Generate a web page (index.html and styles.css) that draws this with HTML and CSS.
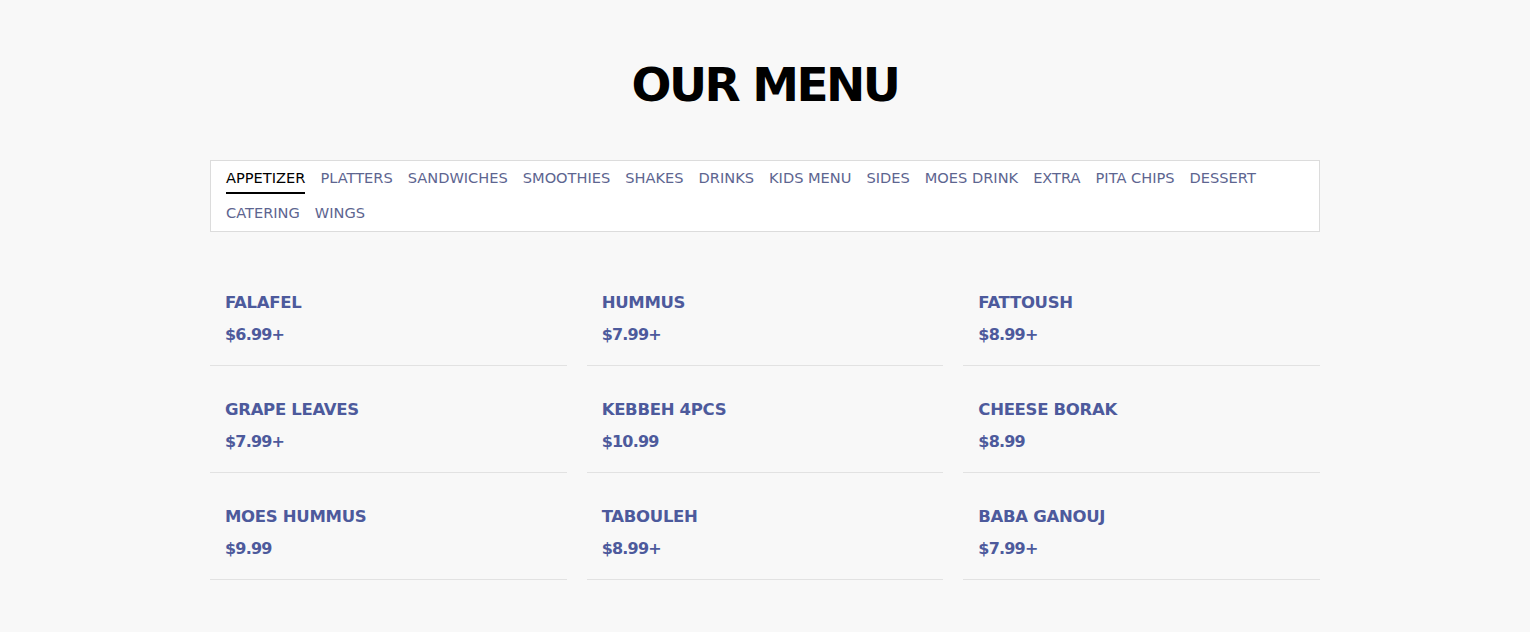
FILE: index.html
```html
<!DOCTYPE html>
<html>
<head>
<meta charset="utf-8">
<link rel="stylesheet" href="styles.css">
</head>
<body>
<div class="container">
  <h1 class="title">OUR MENU</h1>
  <div class="tabs">
    <span class="tab active">APPETIZER</span>
    <span class="tab">PLATTERS</span>
    <span class="tab">SANDWICHES</span>
    <span class="tab">SMOOTHIES</span>
    <span class="tab">SHAKES</span>
    <span class="tab">DRINKS</span>
    <span class="tab">KIDS MENU</span>
    <span class="tab">SIDES</span>
    <span class="tab">MOES DRINK</span>
    <span class="tab">EXTRA</span>
    <span class="tab">PITA CHIPS</span>
    <span class="tab">DESSERT</span>
    <span class="tab">CATERING</span>
    <span class="tab">WINGS</span>
  </div>
  <div class="grid">
    <div class="item"><div class="name">FALAFEL</div><div class="price">$6.99+</div></div>
    <div class="item"><div class="name">HUMMUS</div><div class="price">$7.99+</div></div>
    <div class="item"><div class="name">FATTOUSH</div><div class="price">$8.99+</div></div>
    <div class="item"><div class="name">GRAPE LEAVES</div><div class="price">$7.99+</div></div>
    <div class="item"><div class="name">KEBBEH 4PCS</div><div class="price">$10.99</div></div>
    <div class="item"><div class="name">CHEESE BORAK</div><div class="price">$8.99</div></div>
    <div class="item"><div class="name">MOES HUMMUS</div><div class="price">$9.99</div></div>
    <div class="item"><div class="name">TABOULEH</div><div class="price">$8.99+</div></div>
    <div class="item"><div class="name">BABA GANOUJ</div><div class="price">$7.99+</div></div>
  </div>
</div>
</body>
</html>
```
FILE: styles.css
```css
html, body {
  margin: 0;
  padding: 0;
  background: #f8f8f8;
  font-family: "DejaVu Sans", "Noto Sans", sans-serif;
}
.container {
  width: 1110px;
  margin: 0 auto;
  padding-top: 52px;
}
.title {
  margin: 0;
  text-align: center;
  font-size: 47px;
  line-height: 66px;
  font-weight: 700;
  color: #000;
  letter-spacing: -2.5px;
}
.tabs {
  margin-top: 42px;
  background: #fff;
  border: 1px solid #dcdcdc;
  padding: 0 15px;
  display: flex;
  flex-wrap: wrap;
  column-gap: 15px;
}
.tab {
  font-size: 14.6px;
  line-height: 20px;
  padding: 7px 0 4px;
  border-bottom: 2px solid transparent;
  margin-bottom: 2px;
  color: #5d6590;
}
.tab.active {
  color: #000;
  border-bottom-color: #000;
}
.grid {
  margin-top: 27px;
  display: grid;
  grid-template-columns: repeat(3, 1fr);
  column-gap: 20px;
}
.item {
  padding: 33px 15px 19px;
  border-bottom: 1px solid #e2e2e2;
}
.name, .price {
  font-size: 16.5px;
  line-height: 22px;
  font-weight: 700;
  color: #4d5a9c;
}
.name {
  letter-spacing: -0.3px;
}
.price {
  margin-top: 10px;
  font-size: 16px;
  letter-spacing: -0.8px;
}
```
